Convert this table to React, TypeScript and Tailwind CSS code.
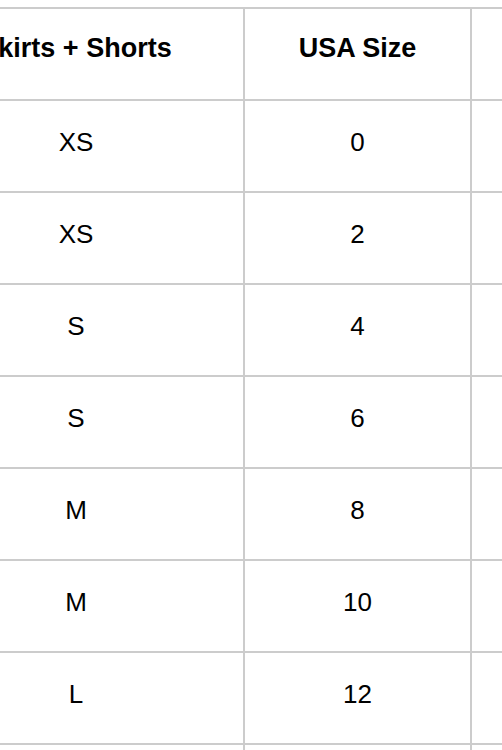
import React from 'react';

const rows: [string, string][] = [
  ['XS', '0'],
  ['XS', '2'],
  ['S', '4'],
  ['S', '6'],
  ['M', '8'],
  ['M', '10'],
  ['L', '12'],
  ['', ''],
];

const Row = ({ a, b, head }: { a: string; b: string; head?: boolean }) => (
  <div className="flex h-[92px] border-t-2 border-[#cccccc]">
    <div
      className={`w-[338px] shrink-0 flex items-center justify-center border-l-2 border-r-2 border-[#cccccc] ${
        head ? 'pb-3 font-bold text-[27px]' : 'pb-2'
      }`}
    >
      {a}
    </div>
    <div
      className={`w-[227px] shrink-0 flex items-center justify-center border-r-2 border-[#cccccc] ${
        head ? 'pb-3 font-bold text-[27px]' : 'pb-2'
      }`}
    >
      {b}
    </div>
    <div className="w-[227px] shrink-0 border-r-2 border-[#cccccc]" />
  </div>
);

export default function App() {
  return (
    <div
      className="h-[750px] w-full overflow-hidden bg-white text-[26px] text-black"
      style={{ fontFamily: '"Liberation Sans", Arial, Helvetica, sans-serif' }}
    >
      <div className="pt-[7px] ml-[-93px] w-[800px]">
        <Row a="Skirts + Shorts" b="USA Size" head />
        {rows.map(([a, b], i) => (
          <Row key={i} a={a} b={b} />
        ))}
      </div>
    </div>
  );
}
